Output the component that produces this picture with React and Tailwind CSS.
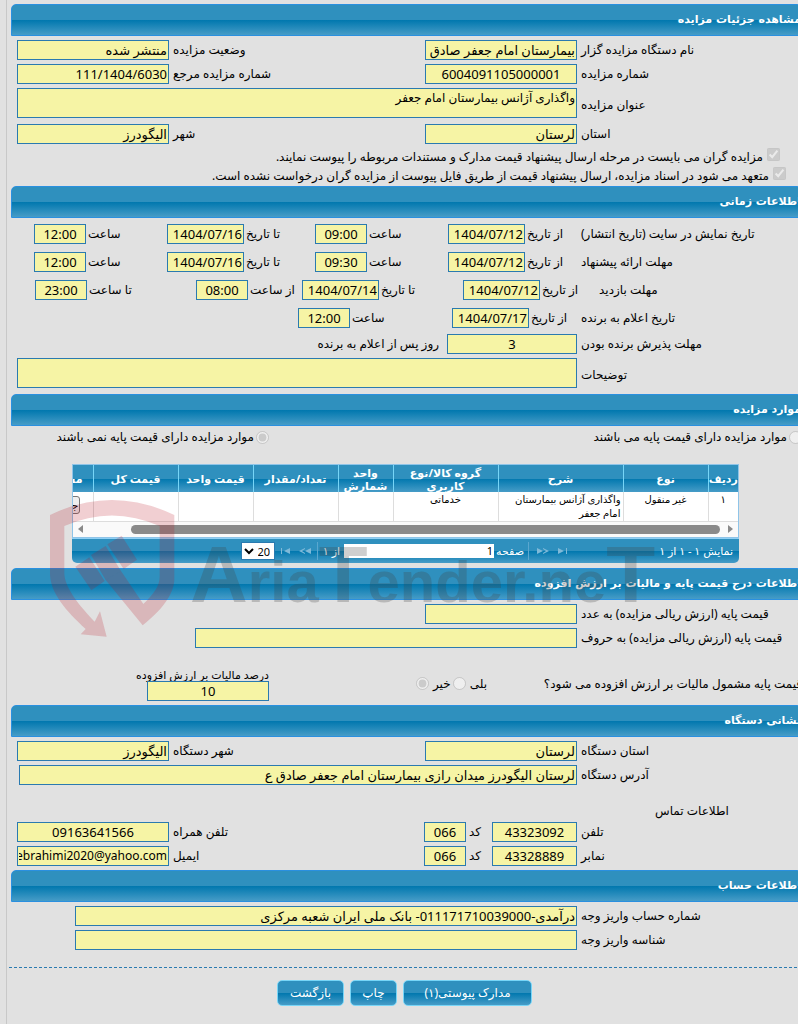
import { useId } from 'react';
import clsx from 'clsx';

const BAR = 'bg-[linear-gradient(to_bottom,#2f90be_0%,#2f90be_50%,#0077ae_50%,#469cc7_100%)]';

const COLUMNS = [
  { title: 'ردیف', width: 'w-[30px]', value: '۱', align: 'text-center' },
  { title: 'نوع', width: 'w-[85px]', value: 'غیر منقول', align: 'text-center' },
  { title: 'شرح', width: 'w-[125px]', value: 'واگذاری آژانس بیمارستان امام جعفر', align: 'text-right' },
  { title: 'گروه کالا/نوع کاربری', width: 'w-[105px]', value: 'خدماتی', align: 'text-center' },
  { title: 'واحد شمارش', width: 'w-[55px]', value: '', align: 'text-center' },
  { title: 'تعداد/مقدار', width: 'w-[85px]', value: '', align: 'text-center' },
  { title: 'قیمت واحد', width: 'w-[75px]', value: '', align: 'text-center' },
  { title: 'قیمت کل', width: 'w-[85px]', value: '', align: 'text-center' },
];

function SectionTitle({ children }) {
  return (
    <h2
      className={clsx(
        "ml-1 flex h-8 items-center rounded-t-[5px] border border-[#2a90e0] font-['DejaVu_Sans',sans-serif] text-[11px] font-bold whitespace-nowrap text-white",
        BAR
      )}
    >
      {children}
    </h2>
  );
}

function Row({ children, className = '' }) {
  return <div className={clsx('flex items-center', className)}>{children}</div>;
}

// label + read-only box; `labelClass` sets the column the text sits in
function Field({
  text,
  value = '',
  labelClass = 'w-[225px] pl-1',
  width = 'w-[152px]',
  size = 'text-[13px]',
  center = false,
}) {
  const id = useId();
  return (
    <>
      <label htmlFor={id} className={clsx('shrink-0 text-left whitespace-nowrap', labelClass)}>
        {text}
      </label>
      <input
        id={id}
        readOnly
        value={value}
        className={clsx(
          'h-5 shrink-0 border border-[#2a7ab0] bg-[#f6f4a5] px-px leading-[18px] text-black outline-none',
          width,
          size,
          center && 'text-center'
        )}
      />
    </>
  );
}

function AreaField({ text, value = '' }) {
  const id = useId();
  return (
    <Row>
      <label htmlFor={id} className="w-[225px] shrink-0 pt-1 pl-1 text-left">
        {text}
      </label>
      <textarea
        id={id}
        readOnly
        value={value}
        className="h-[30px] w-[560px] shrink-0 resize-none overflow-hidden border border-[#2a7ab0] bg-[#f6f4a5] px-px text-xs leading-[18px] text-black outline-none"
      />
    </Row>
  );
}

function Tick({ text, className }) {
  return (
    <label className={clsx('flex h-[19px] items-start gap-1 leading-[18px] whitespace-nowrap', className)}>
      <input type="checkbox" checked readOnly disabled className="m-0 size-[13px]" />
      {text}
    </label>
  );
}

function PagerIcon({ flip = false, last = false }) {
  return (
    <svg viewBox="0 0 12 8" className={clsx('h-2 w-3 fill-[#7fb9d8]', flip && '-scale-x-100')}>
      {last ? (
        <path d="M1 1l6 3-6 3zM9 1h1v6H9z" />
      ) : (
        <path d="M0 1l6 3-6 3zM6 1l6 3-6 3V6l3-2-3-2z" />
      )}
    </svg>
  );
}

function ItemsGrid() {
  return (
    <div className="mr-[63px] w-[667px] text-[11px]">
      <div className="overflow-hidden border border-[#8fc4e8] bg-white">
        <table className="w-[730px] table-fixed border-collapse">
          <thead>
            <tr className={clsx('h-[27px] text-white', BAR)}>
              {COLUMNS.map((c) => (
                <th
                  key={c.title}
                  className={clsx('border-l border-[#77d5f7] p-0 text-[11px] leading-[13px] font-bold', c.width)}
                >
                  {c.title}
                </th>
              ))}
              <th className="w-[85px] py-0 pr-2.5 pl-0 text-right text-[11px] leading-[13px] font-bold">مستندات</th>
            </tr>
          </thead>
          <tbody>
            <tr className="h-[29px] border-b border-[#dddddd] align-top">
              {COLUMNS.map((c) => (
                <td
                  key={c.title}
                  className={clsx('border-l border-[#dddddd] px-0.5 py-0 text-[10px] leading-[14px]', c.align)}
                >
                  {c.value}
                </td>
              ))}
              <td className="p-0 pt-1 text-center">
                <button
                  type="button"
                  className="h-[18px] w-[60px] rounded-[3px] border border-[#767676] bg-[#efefef] px-px text-right text-[11px] leading-4"
                >
                  جزئیات
                </button>
              </td>
            </tr>
          </tbody>
        </table>
        {/* horizontal scroll bar */}
        <div className="flex h-[15px] items-center bg-[#fafafa] px-[5px]">
          <svg viewBox="0 0 5 8" className="h-2 w-[5px] fill-[#8a8a8a]">
            <path d="M0 0l5 4-5 4z" />
          </svg>
          <div className="mr-2 h-[9px] w-[589px] rounded-full bg-[#8a8a8a]" />
          <svg viewBox="0 0 5 8" className="mr-auto h-2 w-[5px] fill-[#8a8a8a]">
            <path d="M5 0L0 4l5 4z" />
          </svg>
        </div>
      </div>
      <div
        className={clsx('flex h-[25px] items-center rounded-b-[5px] border-t border-[#8fd0f5] pr-1.5 text-white', BAR)}
      >
        <span className="w-[164px]">نمایش ۱ - ۱ از ۱</span>
        <button type="button" aria-label="صفحه اول">
          <PagerIcon last />
        </button>
        <button type="button" aria-label="صفحه قبل" className="mr-2">
          <PagerIcon />
        </button>
        <span className="mr-2 ml-1 h-[18px] w-px bg-[#5aa7cf]" />
        <label htmlFor="page" className="w-[26px] text-left">
          صفحه
        </label>
        <input
          id="page"
          defaultValue="1"
          className="mr-1 h-[14px] w-[150px] bg-white px-px text-[11px] leading-3 text-black"
        />
        <span className="mr-1 w-[18px] whitespace-nowrap">از ۱</span>
        <span className="mx-1 h-[18px] w-px bg-[#5aa7cf]" />
        <button type="button" aria-label="صفحه بعد" className="mr-0.5">
          <PagerIcon flip />
        </button>
        <button type="button" aria-label="صفحه آخر" className="mr-2">
          <PagerIcon flip last />
        </button>
        <select
          aria-label="تعداد در صفحه"
          className="mr-1 h-[18px] w-[34px] border border-[#2a7ab0] bg-white text-[11px] leading-4 text-black"
        >
          <option>20</option>
          <option>50</option>
        </select>
      </div>
    </div>
  );
}

function Watermark() {
  return (
    <div dir="ltr" aria-hidden="true" className="pointer-events-none absolute top-[455px] left-[45px] flex">
      <svg viewBox="0 0 435 570" className="h-[190px] w-[145px] shrink-0 fill-[#b80f1e]/20">
        <path d="M15 180Q200 90 388 180V372C388 420 345 470 293 511L182 375 228 348 295 447C328 415 344 392 344 365V213Q200 150 58 213V355C58 395 100 450 149 500L165 469 185 545 107 538 122 522C65 470 15 415 15 355Z" />
        <path d="M187 268l43-26 46 72-40 28zM138 300l44-27 46 75-46 27zM91 335l42-28 46 71-40 28z" />
      </svg>
      <span className="mt-[70px] font-['Liberation_Sans',sans-serif] text-[58px] leading-[100px] font-bold whitespace-nowrap text-[#404040]/25">
        <span className="text-[80px]">A</span>ria<span className="text-[80px]">T</span>ender.ne
        <span className="text-[80px]">T</span>
      </span>
    </div>
  );
}

function FormButton({ children, className }) {
  return (
    <button
      type="button"
      className={clsx('h-[26px] rounded-[5px] border border-[#77d5f7] text-xs text-white', BAR, className)}
    >
      {children}
    </button>
  );
}

export default function App() {
  return (
    <div
      dir="rtl"
      className="relative min-h-screen overflow-hidden bg-[#e1e1e1] pt-1 pl-1.5 font-['Noto_Sans','DejaVu_Sans',sans-serif] text-xs leading-[14px] text-black"
    >
      <div className="absolute inset-y-0 left-1.5 w-px bg-[#c8c8c8]" />
      <main className="-mr-1 pl-px">
        <SectionTitle>مشاهده جزئیات مزایده</SectionTitle>
        <div className="flex flex-col gap-1 pt-1">
          <Row>
            <Field text="نام دستگاه مزایده گزار" value="بیمارستان امام جعفر صادق ع" />
            <Field text="وضعیت مزایده" value="منتشر شده" labelClass="w-[256px] pl-1" />
          </Row>
          <Row>
            <Field text="شماره مزایده" value="6004091105000001" center />
            <Field text="شماره مزایده مرجع" value="111/1404/6030" labelClass="w-[256px] pl-1" />
          </Row>
          <AreaField text="عنوان مزایده" value="واگذاری آژانس بیمارستان امام جعفر" />
          <Row className="mt-0.5">
            <Field text="استان" value="لرستان" />
            <Field text="شهر" value="الیگودرز" labelClass="w-[256px] pl-1" />
          </Row>
        </div>
        <div className="pt-1">
          <Tick
            className="pr-[22px]"
            text="مزایده گران می بایست در مرحله ارسال پیشنهاد قیمت مدارک و مستندات مربوطه را پیوست نمایند."
          />
          <Tick
            className="pr-4"
            text="متعهد می شود در اسناد مزایده، ارسال پیشنهاد قیمت از طریق فایل پیوست از مزایده گران درخواست نشده است."
          />
        </div>

        <SectionTitle>اطلاعات زمانی</SectionTitle>
        <div className="flex flex-col gap-2 pt-1.5">
          <Row>
            <span className="w-[221px] text-left">تاریخ نمایش در سایت (تاریخ انتشار)</span>
            <Field text="از تاریخ" value="1404/07/12" labelClass="w-[56px] pl-0.5" width="w-[77px]" />
            <Field text="ساعت" value="09:00" labelClass="w-[81px] pl-0.5" width="w-[52px]" center />
            <Field text="تا تاریخ" value="1404/07/16" labelClass="w-[71px] pl-0.5" width="w-[77px]" />
            <Field text="ساعت" value="12:00" labelClass="w-[81px] pl-0.5" width="w-[52px]" center />
          </Row>
          <Row>
            <span className="w-[221px] text-left">مهلت ارائه پیشنهاد</span>
            <Field text="از تاریخ" value="1404/07/12" labelClass="w-[56px] pl-0.5" width="w-[77px]" />
            <Field text="ساعت" value="09:30" labelClass="w-[81px] pl-0.5" width="w-[52px]" center />
            <Field text="تا تاریخ" value="1404/07/16" labelClass="w-[71px] pl-0.5" width="w-[77px]" />
            <Field text="ساعت" value="12:00" labelClass="w-[81px] pl-0.5" width="w-[52px]" center />
          </Row>
          <Row>
            <span className="w-[203px] text-left">مهلت بازدید</span>
            <Field text="از تاریخ" value="1404/07/12" labelClass="w-[59px] pl-0.5" width="w-[77px]" />
            <Field text="تا تاریخ" value="1404/07/14" labelClass="w-[84px] pl-0.5" width="w-[77px]" />
            <Field text="از ساعت" value="08:00" labelClass="w-[54px] pl-0.5" width="w-[52px]" center />
            <Field text="تا ساعت" value="23:00" labelClass="w-[109px] pl-0.5" width="w-[52px]" center />
          </Row>
          <Row>
            <span className="w-[221px] text-left">تاریخ اعلام به برنده</span>
            <Field text="از تاریخ" value="1404/07/17" labelClass="w-[52px] pl-0.5" width="w-[77px]" />
            <Field text="ساعت" value="12:00" labelClass="w-[102px] pl-0.5" width="w-[52px]" center />
          </Row>
        </div>
        <div className="flex flex-col gap-1 py-1.5">
          <Row>
            <Field text="مهلت پذیرش برنده بودن" value="3" width="w-[130px]" center />
            <span className="pr-2">روز پس از اعلام به برنده</span>
          </Row>
          <AreaField text="توضیحات" />
        </div>

        <SectionTitle>موارد مزایده</SectionTitle>
        <div className="flex h-[38px] items-start pt-1">
          <label className="flex w-[533px] items-center gap-0.5">
            <input type="radio" name="base" disabled className="m-0 size-[13px]" />
            موارد مزایده دارای قیمت پایه می باشند
          </label>
          <label className="flex items-center gap-0.5">
            <input type="radio" name="base" disabled defaultChecked className="m-0 size-[13px]" />
            موارد مزایده دارای قیمت پایه نمی باشند
          </label>
        </div>
        <ItemsGrid />

        <div className="pt-[5px]">
          <SectionTitle>اطلاعات درج قیمت پایه و مالیات بر ارزش افزوده</SectionTitle>
        </div>
        <div className="flex flex-col gap-1 pt-1">
          <Row>
            <Field text="قیمت پایه (ارزش ریالی مزایده) به عدد" />
          </Row>
          <Row>
            <Field text="قیمت پایه (ارزش ریالی مزایده) به حروف" width="w-[382px]" />
          </Row>
        </div>
        <div className="flex items-end pt-5 pb-1">
          <div className="flex h-7 items-start gap-0.5 pt-1">
            <span className="w-[255px] text-left whitespace-nowrap">قیمت پایه مشمول مالیات بر ارزش افزوده می شود؟</span>
            <label className="mr-[58px] flex gap-1">
              بلی
              <input type="radio" name="vat" disabled className="m-0 size-[13px]" />
            </label>
            <label className="flex gap-1">
              خیر
              <input type="radio" name="vat" disabled defaultChecked className="m-0 size-[13px]" />
            </label>
          </div>
          <div className="mr-auto ml-[127px] flex w-[135px] flex-col items-start">
            <label htmlFor="vat-rate" className="text-[11px] leading-[13px] whitespace-nowrap">
              درصد مالیات بر ارزش افزوده
            </label>
            <input
              id="vat-rate"
              readOnly
              value="10"
              className="h-5 w-[122px] border border-[#2a7ab0] bg-[#f6f4a5] text-center text-[13px] leading-[18px] outline-none"
            />
          </div>
        </div>

        <SectionTitle>نشانی دستگاه</SectionTitle>
        <div className="flex flex-col gap-1 py-1">
          <Row>
            <Field text="استان دستگاه" value="لرستان" />
            <Field text="شهر دستگاه" value="الیگودرز" labelClass="w-[256px] pl-1" />
          </Row>
          <Row>
            <Field
              text="آدرس دستگاه"
              value="لرستان الیگودرز میدان رازی بیمارستان امام جعفر صادق ع"
              width="w-[558px]"
            />
          </Row>
          <h3 className="flex h-[29px] w-[147px] items-end justify-end">اطلاعات تماس</h3>
          <Row>
            <Field text="تلفن" value="43323092" width="w-[85px]" center />
            <Field text="کد" value="066" labelClass="w-[26px] pl-[3px]" width="w-[42px]" center />
            <Field text="تلفن همراه" value="09163641566" labelClass="w-[255px] pl-1" center />
          </Row>
          <Row>
            <Field text="نمابر" value="43328889" width="w-[85px]" center />
            <Field text="کد" value="066" labelClass="w-[26px] pl-[3px]" width="w-[42px]" center />
            <Field text="ایمیل" value="ebrahimi2020@yahoo.com" labelClass="w-[255px] pl-1" size="text-xs" />
          </Row>
        </div>

        <SectionTitle>اطلاعات حساب</SectionTitle>
        <div className="flex flex-col gap-1 pt-1">
          <Row>
            <Field
              text="شماره حساب واریز وجه"
              value="درآمدی-011171710039000- بانک ملی ایران شعبه مرکزی"
              width="w-[502px]"
            />
          </Row>
          <Row>
            <Field text="شناسه واریز وجه" width="w-[502px]" />
          </Row>
        </div>
        <div className="mt-[17px] ml-0.5 border-t border-dashed border-[#2a7ab0]" />
        <div className="mt-3 flex justify-center gap-1.5 pb-4">
          <FormButton className="w-[129px]">مدارک پیوستی(۱)</FormButton>
          <FormButton className="w-[47px]">چاپ</FormButton>
          <FormButton className="w-[67px]">بازگشت</FormButton>
        </div>
      </main>
      <Watermark />
    </div>
  );
}
